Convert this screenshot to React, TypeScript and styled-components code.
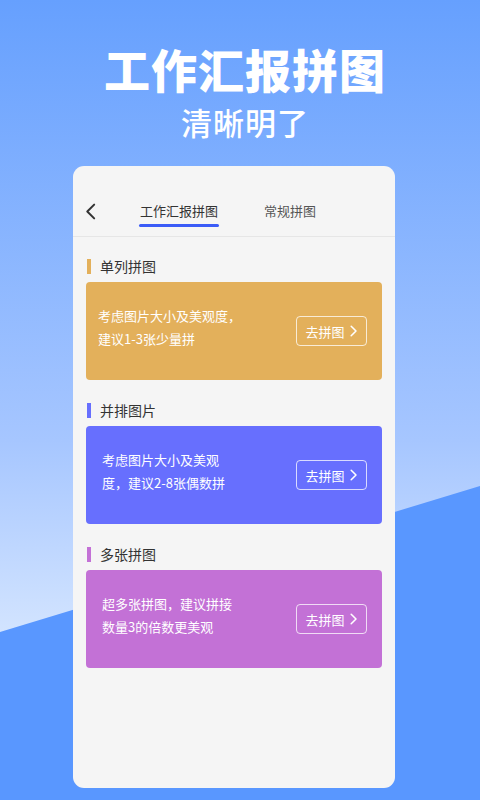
import styled, { createGlobalStyle } from "styled-components";

const GlobalStyle = createGlobalStyle`
  html, body {
    margin: 0;
    padding: 0;
  }
  body {
    font-family: "Noto Sans CJK SC", "Noto Sans", sans-serif;
  }
`;

const Page = styled.div`
  position: relative;
  width: 480px;
  height: 800px;
  overflow: hidden;
  background: linear-gradient(180deg, #66a0fe 0%, #a6c6ff 55%, #d4e5ff 80%);
  display: flex;
  flex-direction: column;
  align-items: center;

  &::before {
    content: "";
    position: absolute;
    inset: 0;
    background: #5997ff;
    clip-path: polygon(0 632px, 100% 486px, 100% 100%, 0 100%);
  }
`;

const Hero = styled.div`
  position: relative;
  display: flex;
  flex-direction: column;
  align-items: center;
  color: #ffffff;
  padding: 37px 0 0 10px;
`;

const HeroTitle = styled.h1`
  margin: 0;
  font-size: 46px;
  line-height: 62px;
  font-weight: 900;
  letter-spacing: 1px;
`;

const HeroSub = styled.h2`
  margin: 0;
  font-size: 31px;
  line-height: 46px;
  font-weight: 500;
  letter-spacing: 1px;
`;

const Panel = styled.div`
  position: relative;
  margin: 21px 12px 0 0;
  width: 322px;
  height: 622px;
  background: #f5f5f5;
  border-radius: 11px;
  display: flex;
  flex-direction: column;
`;

const Header = styled.div`
  height: 71px;
  border-bottom: 1px solid #e6e6e6;
  display: flex;
  align-items: center;
  padding: 20px 12px 0;
  box-sizing: border-box;
`;

const Back = styled.div`
  width: 14px;
  height: 20px;
  display: flex;
  align-items: center;
  margin-right: 41px;
`;

const Tab = styled.div<{ $active?: boolean }>`
  position: relative;
  font-size: 13px;
  line-height: 20px;
  color: ${(p) => (p.$active ? "#333333" : "#555555")};
  margin-right: 46px;

  &::after {
    content: "";
    display: ${(p) => (p.$active ? "block" : "none")};
    position: absolute;
    left: -1px;
    right: -1px;
    bottom: -6px;
    height: 3px;
    border-radius: 2px;
    background: #3b5cf7;
  }
`;

const Body = styled.div`
  padding: 19px 13px 0;
  display: flex;
  flex-direction: column;
`;

const Section = styled.div`
  display: flex;
  flex-direction: column;
  margin-bottom: 20px;
`;

const SectionTitle = styled.div<{ $color: string }>`
  display: flex;
  align-items: center;
  height: 20px;
  margin-bottom: 6px;
  font-size: 14px;
  color: #333333;

  &::before {
    content: "";
    width: 4px;
    height: 15px;
    background: ${(p) => p.$color};
    margin: 0 9px 0 1px;
  }
`;

const Card = styled.div<{ $color: string; $inset: number }>`
  height: 98px;
  box-sizing: border-box;
  background: ${(p) => p.$color};
  border-radius: 4px;
  display: flex;
  align-items: center;
  justify-content: space-between;
  padding: 0 15px 0 ${(p) => p.$inset}px;
`;

const Desc = styled.div`
  font-size: 13px;
  line-height: 23px;
  color: #ffffff;
  margin-bottom: 8px;
`;

const GoButton = styled.div`
  width: 71px;
  height: 30px;
  box-sizing: border-box;
  border: 1px solid rgba(255, 255, 255, 0.75);
  border-radius: 4px;
  display: flex;
  align-items: center;
  justify-content: center;
  gap: 6px;
  font-size: 13px;
  color: #ffffff;
`;

const Chevron = ({ color, size }: { color: string; size: number }) => (
  <svg width={size * 0.6} height={size} viewBox="0 0 6 10" fill="none">
    <path d="M1 1l4 4-4 4" stroke={color} strokeWidth="1.3" strokeLinecap="round" strokeLinejoin="round" />
  </svg>
);

const sections = [
  { title: "单列拼图", color: "#e3b05b", inset: 12, lines: ["考虑图片大小及美观度，", "建议1-3张少量拼"] },
  { title: "并排图片", color: "#676ffe", inset: 16, lines: ["考虑图片大小及美观", "度，建议2-8张偶数拼"] },
  { title: "多张拼图", color: "#c371d6", inset: 16, lines: ["超多张拼图，建议拼接", "数量3的倍数更美观"] },
];

export default function App() {
  return (
    <>
      <GlobalStyle />
      <Page>
        <Hero>
          <HeroTitle>工作汇报拼图</HeroTitle>
          <HeroSub>清晰明了</HeroSub>
        </Hero>
        <Panel>
          <Header>
            <Back>
              <svg width="11" height="17" viewBox="0 0 12 18" fill="none">
                <path d="M10 1.5L2.5 9l7.5 7.5" stroke="#333" strokeWidth="2.2" strokeLinecap="round" strokeLinejoin="round" />
              </svg>
            </Back>
            <Tab $active>工作汇报拼图</Tab>
            <Tab>常规拼图</Tab>
          </Header>
          <Body>
            {sections.map((s) => (
              <Section key={s.title}>
                <SectionTitle $color={s.color}>{s.title}</SectionTitle>
                <Card $color={s.color} $inset={s.inset}>
                  <Desc>
                    {s.lines[0]}
                    <br />
                    {s.lines[1]}
                  </Desc>
                  <GoButton>
                    去拼图
                    <Chevron color="#ffffff" size={12} />
                  </GoButton>
                </Card>
              </Section>
            ))}
          </Body>
        </Panel>
      </Page>
    </>
  );
}
